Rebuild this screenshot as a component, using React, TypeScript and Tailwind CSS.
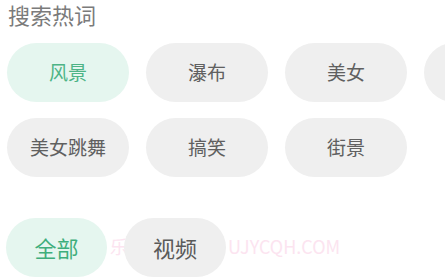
const hot = ["风景", "瀑布", "美女", "自然", "美女跳舞", "搞笑", "街景"];

export default function App() {
  return (
    <div
      className="h-[277px] w-[445px] overflow-hidden bg-white"
      style={{ fontFamily: '"Noto Sans CJK SC", "Noto Sans", sans-serif' }}
    >
      <h2 className="pl-[8px] pt-[1px] text-[22px] leading-[26px] text-[#7b7b7b]">搜索热词</h2>
      <div className="mt-[16px] flex w-[560px] flex-wrap gap-x-[17px] gap-y-[16px] pl-[7px]">
        {hot.map((w, i) => (
          <button
            key={w}
            type="button"
            className={`h-[59px] w-[122px] rounded-full text-[19px] ${
              i === 0 ? "bg-[#e5f6ef] text-[#4db486]" : "bg-[#efefef] text-[#606060]"
            }`}
          >
            {w}
          </button>
        ))}
      </div>
      <div className="relative mt-[41px] flex gap-[17px] pl-[6px]">
        <span className="absolute left-[110px] top-[17px] whitespace-nowrap text-[18px] leading-[22px] text-[#fce4f0]">
          乐享
        </span>
        <span className="absolute left-[228px] top-[17px] whitespace-nowrap text-[18px] leading-[22px] text-[#fce4f0]">
          UJYCQH.COM
        </span>
        <button
          type="button"
          className="relative h-[59px] w-[101px] rounded-full bg-[#e5f6ef] text-[22px] text-[#3fae7c]"
        >
          全部
        </button>
        <button
          type="button"
          className="relative h-[59px] w-[102px] rounded-full bg-[#efefef] text-[22px] text-[#5a5a5a]"
        >
          视频
        </button>
      </div>
    </div>
  );
}
